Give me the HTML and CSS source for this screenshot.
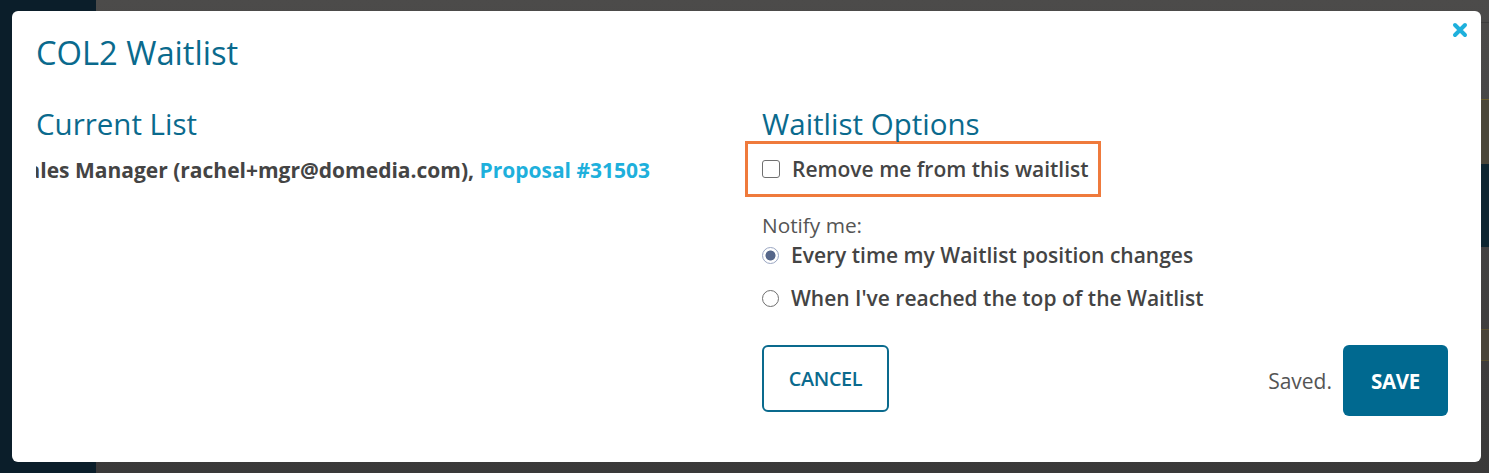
FILE: index.html
```html
<!DOCTYPE html>
<html lang="en">
<head>
<meta charset="utf-8">
<title>COL2 Waitlist</title>
<link rel="stylesheet" href="styles.css">
</head>
<body>
<div class="page">
  <aside class="sidebar"></aside>
  <main class="backdrop">
    <div class="band band-top"></div>
    <div class="band band-olive"></div>
    <div class="band band-navy"></div>
    <div class="band band-gray"></div>
    <div class="band band-olive2"></div>
    <div class="band band-rest"></div>
  </main>
</div>

<div class="modal">
  <button class="close" aria-label="Close">
    <svg width="16" height="16" viewBox="0 0 16 16"><path d="M3 3 L13 13 M13 3 L3 13" stroke="#1eb0dc" stroke-width="4" stroke-linecap="round"/></svg>
  </button>
  <h1 class="title">COL2 Waitlist</h1>
  <div class="columns">
    <section class="col">
      <h2 class="heading">Current List</h2>
      <div class="clip">
        <p class="entry">Sales Manager (rachel+mgr@domedia.com), <a class="link" href="#">Proposal #31503</a></p>
      </div>
    </section>
    <section class="col">
      <h2 class="heading">Waitlist Options</h2>
      <label class="remove-box">
        <span class="checkbox"></span>
        <span class="opt-text">Remove me from this waitlist</span>
      </label>
      <div class="notify">Notify me:</div>
      <label class="radio-row">
        <span class="radio checked"></span>
        <span class="opt-text">Every time my Waitlist position changes</span>
      </label>
      <label class="radio-row second">
        <span class="radio"></span>
        <span class="opt-text">When I've reached the top of the Waitlist</span>
      </label>
      <div class="actions">
        <button class="btn-cancel">CANCEL</button>
        <div class="save-group">
          <span class="saved">Saved.</span>
          <button class="btn-save">SAVE</button>
        </div>
      </div>
    </section>
  </div>
</div>
</body>
</html>
```

FILE: styles.css
```css
* { box-sizing: border-box; }

html, body {
  margin: 0;
  padding: 0;
  height: 473px;
  overflow: hidden;
}

body {
  font-family: "Open Sans", "Noto Sans", sans-serif;
  background: #444;
}

.page {
  display: flex;
  height: 473px;
}

.sidebar {
  width: 96px;
  background: #0b1e2a;
}

.backdrop {
  flex: 1;
  display: flex;
  flex-direction: column;
  background: linear-gradient(#4c4b4a, #3a3939);
}

.band-top { height: 23px; border-bottom: 1px solid #3d3d3d; }
.band-olive { margin-top: 76px; height: 65px; background: #4a4639; border-top: 1px solid #6a5d2c; }
.band-navy { height: 83px; background: #0d2530; }
.band-gray { height: 82px; }
.band-olive2 { height: 32px; background: #48443a; border-top: 1px solid #5a5030; border-bottom: 1px solid #5a5030; }
.band-rest { flex: 1; }

.modal {
  position: absolute;
  top: 11px;
  left: 12px;
  width: 1469px;
  height: 451px;
  background: #fff;
  border-radius: 6px;
  padding: 22px 33px 0 24px;
  color: #444;
}

.close {
  position: absolute;
  top: 11px;
  right: 13px;
  padding: 0;
  border: 0;
  background: none;
  width: 16px;
  height: 16px;
  display: flex;
}

.title {
  margin: 0;
  font-size: 32.7px;
  line-height: 40px;
  font-weight: 400;
  color: #0a6a8d;
}

.columns {
  display: flex;
  gap: 40px;
  margin-top: 34px;
}

.col {
  flex: 1;
  min-width: 0;
}

.heading {
  margin: 0;
  font-size: 29.5px;
  line-height: 34px;
  font-weight: 400;
  color: #0a6a8d;
}

.clip {
  overflow: hidden;
  margin-top: 16px;
}

.entry {
  margin: 0 0 0 -20px;
  white-space: nowrap;
  font-size: 21px;
  line-height: 26px;
  font-weight: 700;
  color: #444;
}

.link {
  color: #1eb0dc;
  text-decoration: none;
}

.remove-box {
  display: flex;
  align-items: center;
  gap: 12px;
  width: 356px;
  height: 56px;
  margin-left: -17px;
  padding-left: 14px;
  border: 3px solid #ef7a3c;
}

.checkbox {
  width: 18px;
  height: 18px;
  border: 1.5px solid #707070;
  border-radius: 3px;
  background: #fff;
  flex: none;
}

.opt-text {
  font-size: 21px;
  font-weight: 600;
  line-height: 24px;
  color: #444;
  white-space: nowrap;
}

.notify {
  margin-top: 16px;
  font-size: 20.8px;
  line-height: 24px;
  color: #555;
}

.radio-row {
  display: flex;
  align-items: center;
  gap: 12px;
  margin-top: 6px;
}

.radio-row.second {
  margin-top: 19px;
}

.radio {
  width: 17px;
  height: 17px;
  border: 1.5px solid #6f6f6f;
  border-radius: 50%;
  background: #fff;
  flex: none;
}

.radio.checked {
  border: 1.5px solid #9aa6c2;
  background: radial-gradient(circle, #56678a 0 4.6px, #fff 5.4px);
}

.actions {
  display: flex;
  justify-content: space-between;
  align-items: flex-start;
  margin-top: 35px;
}

.btn-cancel {
  width: 127px;
  height: 67px;
  border: 2px solid #0a6a8d;
  border-radius: 6px;
  background: #fff;
  color: #0a6a8d;
  font-family: inherit;
  font-size: 19.8px;
  font-weight: 600;
  letter-spacing: -0.3px;
  padding: 0;
}

.save-group {
  display: flex;
  align-items: center;
  gap: 11px;
}

.saved {
  font-size: 21px;
  color: #555;
}

.btn-save {
  width: 105px;
  height: 71px;
  border: 0;
  border-radius: 6px;
  background: #006990;
  color: #fff;
  font-family: inherit;
  font-size: 20.5px;
  font-weight: 700;
  letter-spacing: -0.3px;
  padding: 0;
}
```
